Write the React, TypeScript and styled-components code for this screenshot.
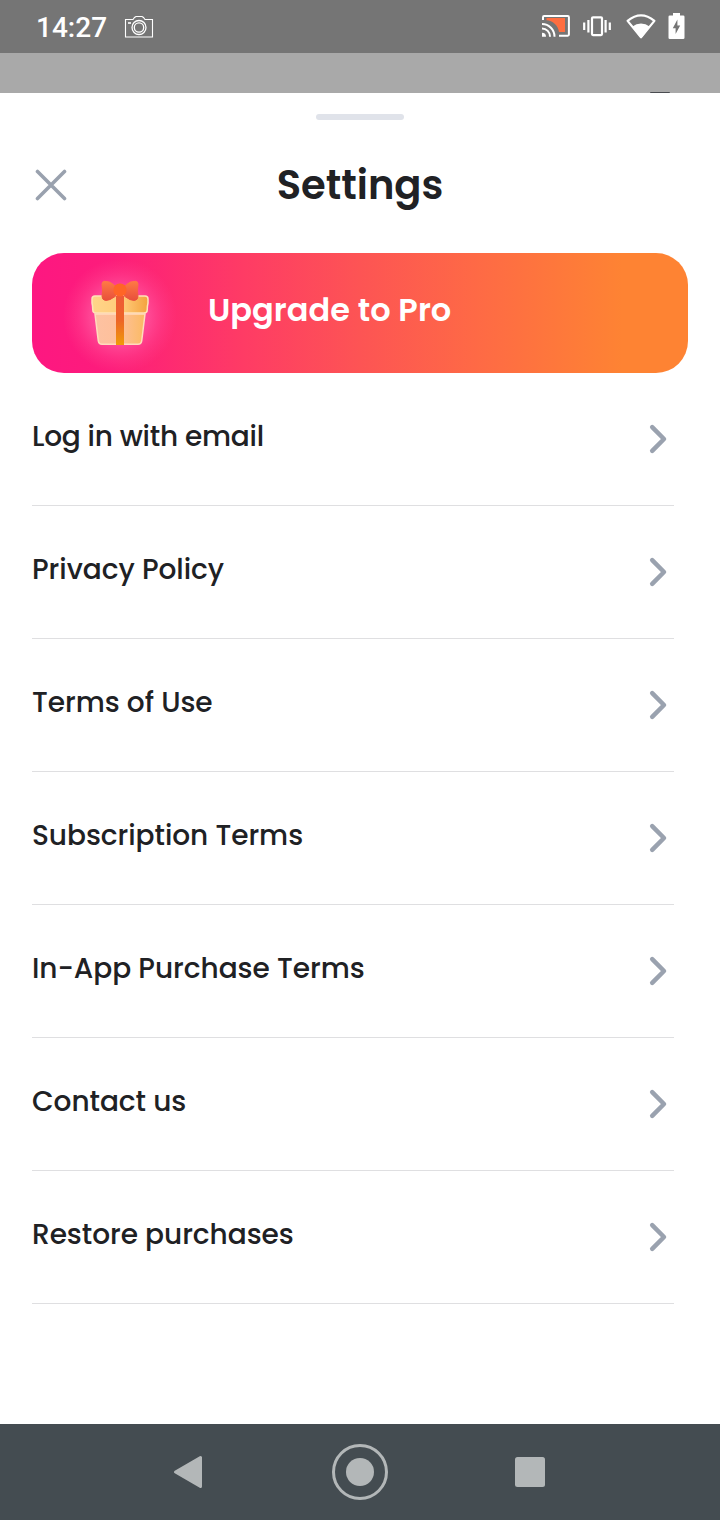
import React from "react";
import styled, { createGlobalStyle } from "styled-components";

const GlobalStyle = createGlobalStyle`
  * { box-sizing: border-box; }
  body { margin: 0; background: #a9a9a9; }
  button { border: 0; padding: 0; background: none; font: inherit; color: inherit; }
`;

const Screen = styled.div`
  display: flex;
  flex-direction: column;
  width: 720px;
  height: 1520px;
  overflow: hidden;
  background: #a9a9a9;
  color: #202124;
  font-family: Poppins, Inter, sans-serif;
`;

const StatusBar = styled.header`
  display: flex;
  align-items: center;
  justify-content: space-between;
  height: 53px;
  padding: 0 35px 0 36px;
  background: #757575;
`;

const StatusGroup = styled.div<{ $gap: number }>`
  display: flex;
  align-items: center;
  gap: ${({ $gap }) => $gap}px;
  svg { display: block; }
`;

const Clock = styled.span`
  width: 71px;
  padding-top: 2px;
  color: #fff;
  font: 500 28px/34px Roboto, sans-serif;
  white-space: nowrap;
`;

const Backdrop = styled.div`
  display: flex;
  align-items: flex-end;
  justify-content: flex-end;
  height: 40px;
  padding-right: 50px;
`;

const BackdropHint = styled.span`
  width: 20px;
  height: 1px;
  border-radius: 1px 1px 0 0;
  background: #4a4c50;
`;

const Sheet = styled.main`
  flex: 1;
  display: flex;
  flex-direction: column;
  padding: 21px 32px 0;
  background: #fff;
`;

const Handle = styled.div`
  align-self: center;
  width: 88px;
  height: 6px;
  border-radius: 3px;
  background: #e0e3ea;
`;

const TitleBar = styled.div`
  display: grid;
  grid-template-columns: 38px 1fr 38px;
  align-items: center;
  height: 133px;
  padding-bottom: 3px;
`;

const CloseButton = styled.button`
  display: flex;
  justify-content: center;
  svg { display: block; }
`;

const Title = styled.h1`
  margin: 0;
  font-size: 40px;
  line-height: 46px;
  font-weight: 600;
  text-align: center;
`;

const Banner = styled.button`
  display: flex;
  align-items: center;
  flex: none;
  height: 120px;
  border-radius: 32px;
  background: linear-gradient(
    90deg,
    #fd1781 0%,
    #fd1c7b 12%,
    #fe3b65 32%,
    #fd5454 50%,
    #fe6a45 68%,
    #fe8333 90%
  );
  color: #fff;
  text-align: left;
  overflow: hidden;
  svg { display: block; flex: none; }
`;

const BannerLabel = styled.span`
  padding-bottom: 6px;
  font-size: 32px;
  line-height: 38px;
  font-weight: 600;
  letter-spacing: 0.05px;
  white-space: nowrap;
`;

const List = styled.nav`
  display: flex;
  flex-direction: column;
  width: 642px;
`;

const Row = styled.button`
  display: flex;
  align-items: flex-start;
  justify-content: space-between;
  height: 133px;
  padding: 48px 6px 0 0;
  border-bottom: 1px solid #dfdfe1;
  svg { display: block; margin-top: 2px; }
`;

const RowLabel = styled.span<{ $tracking?: number }>`
  font-size: 28px;
  line-height: 32px;
  font-weight: 500;
  letter-spacing: ${({ $tracking = -0.05 }) => $tracking}px;
  white-space: nowrap;
`;

const NavBar = styled.footer`
  display: flex;
  align-items: center;
  justify-content: space-between;
  height: 96px;
  padding: 0 160px;
  background: #444c51;
  svg { display: block; }
`;

const rows: { label: string; tracking?: number }[] = [
  { label: "Log in with email", tracking: -0.24 },
  { label: "Privacy Policy" },
  { label: "Terms of Use" },
  { label: "Subscription Terms" },
  { label: "In-App Purchase Terms" },
  { label: "Contact us" },
  { label: "Restore purchases" },
];

const CameraIcon = () => (
  <svg width="30" height="24" viewBox="0 0 30 24" fill="none" stroke="#fff">
    <path d="M1.5 4.5h7.500l1.500-2 1.500-1h6l1.500 1 1.500 2h7.500v17.500h-27z" strokeWidth="1.100" />
    <circle cx="15" cy="12.500" r="7" strokeWidth="1.300" />
    <circle cx="15" cy="12.500" r="4.700" strokeWidth="1.300" />
    <path d="M4 8h3" strokeWidth="1.600" />
  </svg>
);

const CastIcon = () => (
  <svg width="29" height="28" viewBox="0 0 29 28" fill="none" stroke="#fff" strokeWidth="2">
    <path d="M4.500 5h18.500v14h-6C16 12 10.500 7.700 4.500 7.200z" fill="#ff6e40" stroke="none" />
    <path d="M1 7V4.200Q1 3.100 2.100 3.100h23.700q1.100 0 1.100 1.100v17.400q0 1.100-1.100 1.100H17" />
    <path d="M0 11A12.500 12.500 0 0 1 12.500 23.700M0 15.500A8 8 0 0 1 8 23.700" />
    <path d="M0 19.700a4 4 0 0 1 4 4H0z" fill="#fff" stroke="none" />
  </svg>
);

const VibrateIcon = () => (
  <svg width="30" height="22" viewBox="0 0 30 22" fill="none" stroke="#fff" strokeWidth="2.200">
    <rect x="9" y="1.300" width="10" height="17.800" rx="1" />
    <path d="M1.200 6.500v7.500M5.400 4v12.500M22.600 4v12.500M26.800 6.500v7.500" />
  </svg>
);

const WifiIcon = () => (
  <svg width="30" height="26" viewBox="0 0 30 26" fill="none">
    <path d="M1.600 6.900Q15-4 28.400 6.900L15 23.200z" stroke="#fff" strokeWidth="2.200" strokeLinejoin="round" />
    <path d="M6 12.700q9-6.400 18 0L15 24.500z" fill="#fff" />
  </svg>
);

const BatteryIcon = () => (
  <svg width="17" height="27" viewBox="0 0 17 27">
    <path d="M5 0h7v2.500h3.200q1.300 0 1.300 1.300v21q0 1.300-1.300 1.300H1.800q-1.300 0-1.300-1.300v-21Q.5 2.500 1.800 2.500H5z" fill="#fff" />
    <path d="M9.400 6.600 4.800 15.200H7.600V21L12.200 12.500H9.400z" fill="#757575" />
  </svg>
);

const CloseIcon = () => (
  <svg width="32" height="32" viewBox="0 0 32 32" stroke="#99a1ae" strokeWidth="3.600" strokeLinecap="round">
    <path d="M2.500 2.500l27 27M29.500 2.500l-27 27" />
  </svg>
);

const ChevronIcon = () => (
  <svg width="20" height="32" viewBox="0 0 20 32" fill="none" stroke="#9aa2af" strokeWidth="4.500" strokeLinecap="round" strokeLinejoin="round">
    <path d="M4.200 4.200 16 16 4.200 27.800" />
  </svg>
);

const GiftArt = () => (
  <svg width="176" height="120" viewBox="0 0 176 120">
    <defs>
      <radialGradient id="glow">
        <stop offset="0" stopColor="#ff60a6" />
        <stop offset=".5" stopColor="#ff4f9a" stopOpacity=".85" />
        <stop offset=".75" stopColor="#ff4591" stopOpacity=".4" />
        <stop offset="1" stopColor="#ff3f87" stopOpacity="0" />
      </radialGradient>
      <linearGradient id="box" x1="0" y1="0" x2="1" y2="0">
        <stop offset="0" stopColor="#fdc2a2" />
        <stop offset=".5" stopColor="#fec09a" />
        <stop offset="1" stopColor="#fbba62" />
      </linearGradient>
      <linearGradient id="lid" x1="0" y1="0" x2="1" y2="0">
        <stop offset="0" stopColor="#ffd589" />
        <stop offset=".55" stopColor="#ffcb79" />
        <stop offset="1" stopColor="#f4a23e" />
      </linearGradient>
      <linearGradient id="ribbon" x1="0" y1="0" x2="0" y2="1">
        <stop offset="0" stopColor="#ee5a38" />
        <stop offset=".5" stopColor="#ed6527" />
        <stop offset="1" stopColor="#f09b08" />
      </linearGradient>
      <linearGradient id="bow" x1="0" y1="0" x2="0" y2="1">
        <stop offset="0" stopColor="#ff7a44" />
        <stop offset="1" stopColor="#e84f3c" />
      </linearGradient>
    </defs>
    <circle cx="88" cy="63" r="57" fill="url(#glow)" />
    <path d="M63 61h50l-3.300 27q-.5 3.300-3.700 3.300H70q-3.200 0-3.700-3.300z" fill="url(#box)" stroke="#ffdcbd" strokeWidth="1.500" />
    <path d="M63 43h50q3 0 3 3v4q-.8 3-.8 7 0 3-3.200 3H64q-3.200 0-3.200-3 0-4-.8-7v-4q0-3 3-3z" fill="url(#lid)" stroke="#ffe2b8" strokeWidth="1.500" />
    <path d="M84 43h8v49h-8z" fill="url(#ribbon)" />
    <path d="M82.500 32.500Q78 28 72.500 28.300q-2.500.2-2.500 3 1.200 5.500 0 12 0 3.500 3.500 4.200 4 .2 10-4.200zM93.500 32.500q4.500-4.500 10-4.200 2.500.2 2.500 3-1.200 5.500 0 12 0 3.500-3.500 4.200-4 .2-10-4.200z" fill="url(#bow)" stroke="url(#bow)" strokeLinejoin="round" />
    <rect x="81.500" y="30.500" width="13" height="13" rx="6" fill="#ff6526" />
  </svg>
);

const BackIcon = () => (
  <svg width="60" height="60" viewBox="0 0 60 60">
    <path d="M15.500 30 40.500 15.500v29z" fill="#b3b7b8" stroke="#b3b7b8" strokeWidth="3" strokeLinejoin="round" />
  </svg>
);

const HomeIcon = () => (
  <svg width="60" height="60" viewBox="0 0 60 60">
    <circle cx="30" cy="30" r="26.500" fill="none" stroke="#b3b7b8" strokeWidth="3" />
    <circle cx="30" cy="30" r="14" fill="#b3b7b8" />
  </svg>
);

const RecentsIcon = () => (
  <svg width="60" height="60" viewBox="0 0 60 60">
    <rect x="15" y="15" width="30" height="30" rx="2.500" fill="#b3b7b8" />
  </svg>
);

export default function App() {
  return (
    <>
      <GlobalStyle />
      <Screen>
        <StatusBar>
          <StatusGroup $gap={17}>
            <Clock>14:27</Clock>
            <CameraIcon />
          </StatusGroup>
          <StatusGroup $gap={12.5}>
            <CastIcon />
            <VibrateIcon />
            <WifiIcon />
            <BatteryIcon />
          </StatusGroup>
        </StatusBar>
        <Backdrop>
          <BackdropHint />
        </Backdrop>
        <Sheet>
          <Handle />
          <TitleBar>
            <CloseButton aria-label="Close">
              <CloseIcon />
            </CloseButton>
            <Title>Settings</Title>
          </TitleBar>
          <Banner>
            <GiftArt />
            <BannerLabel>Upgrade to Pro</BannerLabel>
          </Banner>
          <List>
            {rows.map(({ label, tracking }) => (
              <Row key={label}>
                <RowLabel $tracking={tracking}>{label}</RowLabel>
                <ChevronIcon />
              </Row>
            ))}
          </List>
        </Sheet>
        <NavBar>
          <BackIcon />
          <HomeIcon />
          <RecentsIcon />
        </NavBar>
      </Screen>
    </>
  );
}
